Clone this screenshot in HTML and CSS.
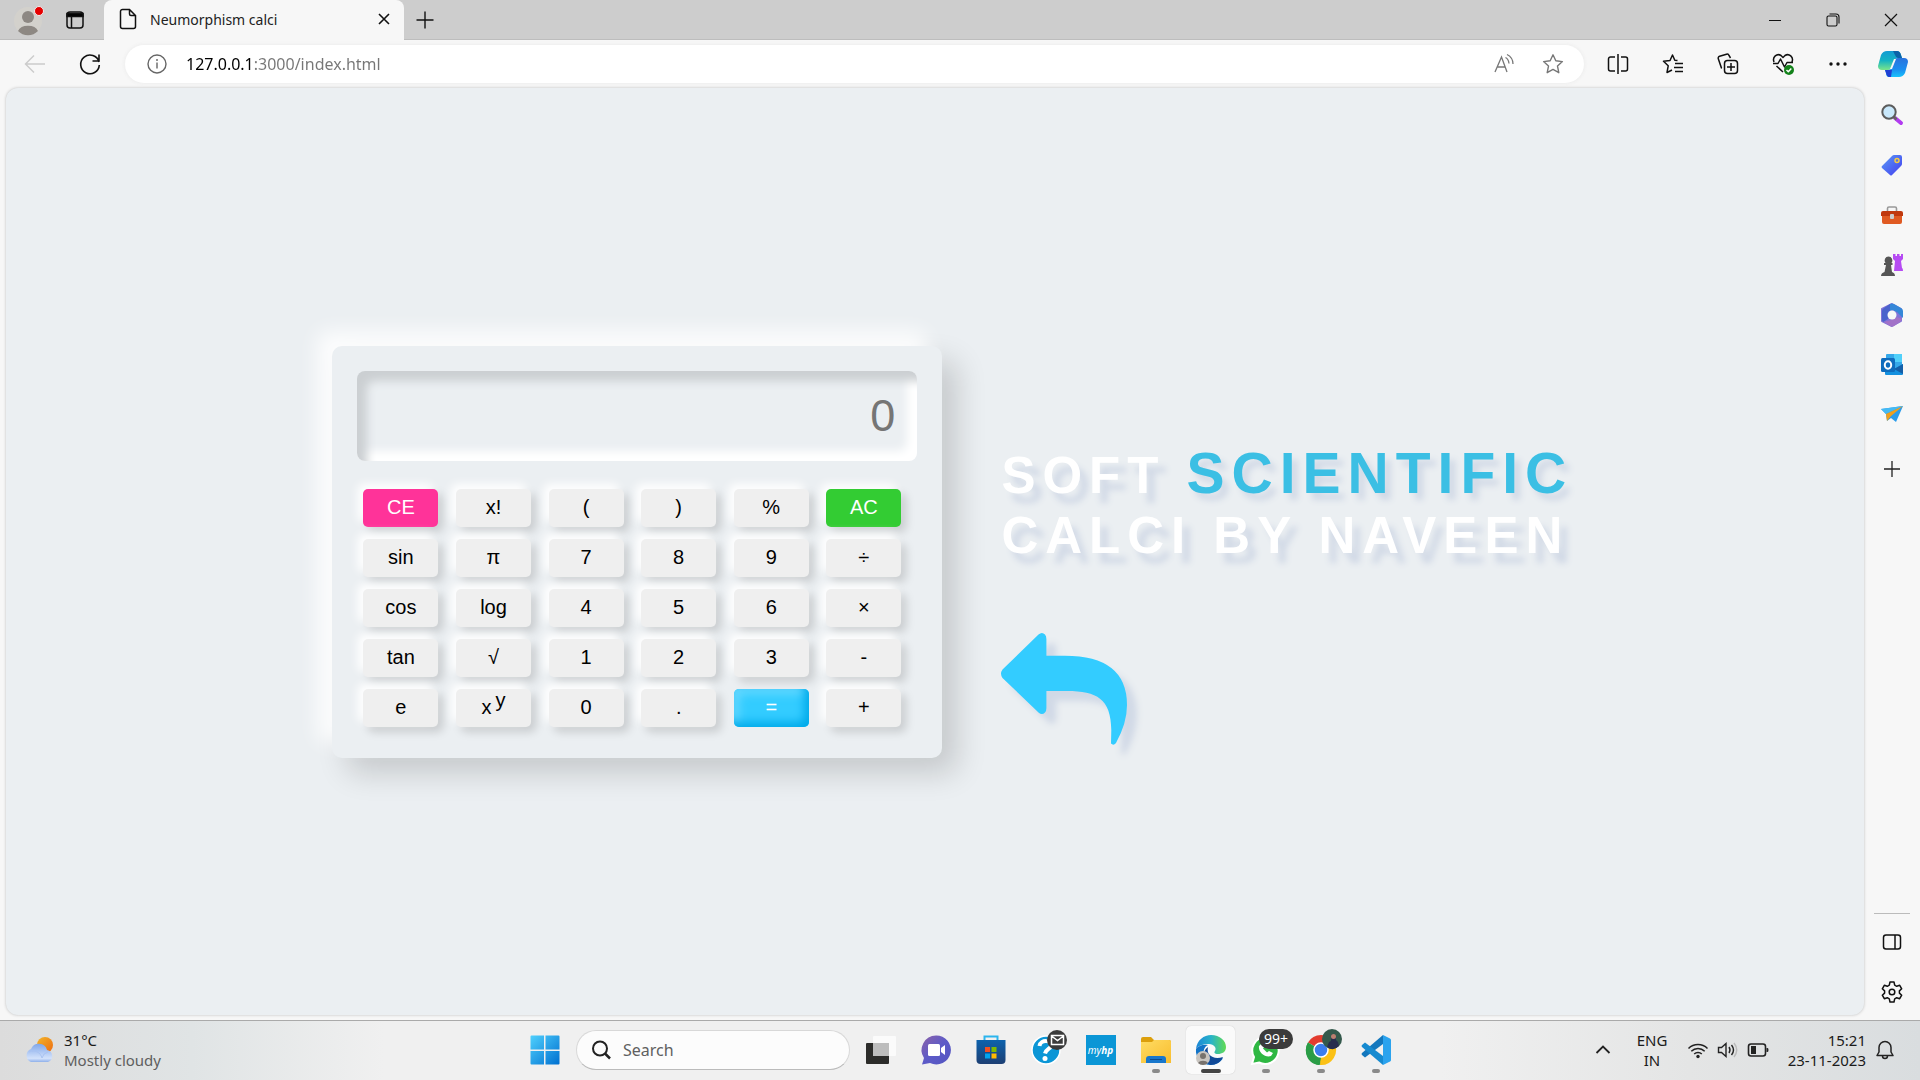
FILE: index.html
```html
<!DOCTYPE html>
<html lang="en">
<head>
<meta charset="utf-8">
<title>Neumorphism calci</title>
<link rel="stylesheet" href="styles.css">
</head>
<body>
<header class="titlebar">
  <button class="icon-btn avatar" aria-label="Profile">
    <svg width="32" height="32" viewBox="0 0 32 32"><circle cx="16" cy="17" r="14" fill="#d3d1cc"/><circle cx="16" cy="13" r="6" fill="#8d8883"/><path d="M6 27a10.500 7.500 0 0 1 20 0a14 14 0 0 1-20 0z" fill="#8d8883"/><circle cx="27" cy="7" r="4.500" fill="#e60000" stroke="#eee"/></svg>
  </button>
  <button class="icon-btn workspace" aria-label="Tab actions">
    <svg width="20" height="20" viewBox="0 0 20 20" fill="none" stroke="#111" stroke-width="1.500"><rect x="2" y="2" width="16" height="16" rx="3"/><path d="M2 3.500h16v3H2z" fill="#000"/><path d="M6.500 6v12"/></svg>
  </button>
  <div class="tab">
    <svg width="18" height="22" viewBox="0 0 18 22" fill="none" stroke="#111" stroke-width="1.500"><path d="M3.500 1.500h7l6 6v11a2 2 0 0 1-2 2h-11a2 2 0 0 1-2-2v-15a2 2 0 0 1 2-2zM10.500 1.500v4.500a1.500 1.500 0 0 0 1.500 1.500h4.500"/></svg>
    <span class="tab-title">Neumorphism calci</span>
    <button class="icon-btn tab-close" aria-label="Close tab"><svg width="12" height="12" viewBox="0 0 12 12" stroke="#111" stroke-width="1.600"><path d="M1 1l10 10M11 1L1 11"/></svg></button>
  </div>
  <button class="icon-btn new-tab" aria-label="New tab"><svg width="18" height="18" viewBox="0 0 18 18" stroke="#111" stroke-width="1.400"><path d="M9 .500v17M.500 9h17"/></svg></button>
  <div class="window-controls">
    <button class="icon-btn" aria-label="Minimize"><svg width="14" height="14" viewBox="0 0 14 14" stroke="#111"><path d="M1 7.500h12"/></svg></button>
    <button class="icon-btn" aria-label="Restore"><svg width="14" height="14" viewBox="0 0 14 14" stroke="#111" stroke-width="1.100" fill="none"><rect x="1" y="3" width="10" height="10" rx="1.500"/><path d="M3.500 1h6.500a3 3 0 0 1 3 3v6.500"/></svg></button>
    <button class="icon-btn" aria-label="Close"><svg width="14" height="14" viewBox="0 0 14 14" stroke="#111" stroke-width="1.200"><path d="M1 1l12 12M13 1L1 13"/></svg></button>
  </div>
</header>

<nav class="toolbar">
  <button class="icon-btn nav-btn" aria-label="Back"><svg width="22" height="20" viewBox="0 0 22 20" fill="none" stroke="#ccc" stroke-width="1.500"><path d="M21 10H2M10 1.500L1.500 10l8.500 8.500"/></svg></button>
  <button class="icon-btn nav-btn" aria-label="Refresh"><svg width="22" height="22" viewBox="0 0 22 22" fill="none" stroke="#111" stroke-width="1.600"><path d="M20 9a9.300 9.300 0 1 0 .3 3M20 1.500V8h-6.500"/></svg></button>
  <div class="address">
    <svg width="20" height="20" viewBox="0 0 20 20" fill="none" stroke="#666" stroke-width="1.400"><circle cx="10" cy="10" r="9"/><path d="M10 8.500v6M10 5v2"/></svg>
    <input class="url" type="text" aria-label="Address" value="127.0.0.1:3000/index.html">
    <button class="icon-btn addr-btn" aria-label="Read aloud"><svg width="22" height="22" viewBox="0 0 22 22" fill="none" stroke="#777" stroke-width="1.300"><path d="M2 19L8.500 4 14 19M4.500 14h8M12.500 4.500q3 1.500 3.500 6M14 1.500q6 3 6 9.500"/></svg></button>
    <button class="icon-btn addr-btn" aria-label="Favorite"><svg width="22" height="22" viewBox="0 0 22 22" fill="none" stroke="#777" stroke-width="1.400" stroke-linejoin="round"><path d="M11 1.800l2.800 6 6.600.8-4.900 4.500 1.300 6.600-5.800-3.300-5.800 3.300 1.300-6.600L1.600 8.600l6.600-.8z"/></svg></button>
  </div>
  <div class="tools">
    <button class="icon-btn" aria-label="Split screen"><svg width="22" height="22" viewBox="0 0 22 22" fill="none" stroke="#111" stroke-width="1.500"><path d="M8 4H3.500A2 2 0 0 0 1.500 6v10a2 2 0 0 0 2 2H8M14 4h4.500a2 2 0 0 1 2 2v10a2 2 0 0 1-2 2H14M11 1v20"/></svg></button>
    <button class="icon-btn" aria-label="Favorites"><svg width="22" height="22" viewBox="0 0 22 22" fill="none" stroke="#111" stroke-width="1.500" stroke-linejoin="round"><path d="M15.500 7.500l-2.700-.3L10.500 2 8 7.500l-6.500.8 4.700 4.500L5 19.500l5-2.500M13 10.500h8M12 14.500h9M13 18.500h8"/></svg></button>
    <button class="icon-btn" aria-label="Collections"><svg width="22" height="22" viewBox="0 0 22 22" fill="none" stroke="#111" stroke-width="1.500"><rect x="7.500" y="7.500" width="13" height="13" rx="3"/><path d="M14 10v8M10 14h8M5 15l-.6-.2L1.300 5.800a2 2 0 0 1 1.300-2.600L9.500 1.200A2 2 0 0 1 12 2.500L13.500 5"/></svg></button>
    <button class="icon-btn" aria-label="Browser essentials"><svg width="22" height="22" viewBox="0 0 22 22" fill="none" stroke="#111" stroke-width="1.500" stroke-linejoin="round"><path d="M2 9C0 4 5 0 9 2.500l2 2 2-2C17 0 22 4 20 9M1 10.500h5l2.500-4.500 4 8 2.500-4.500h6M4.500 13l6.500 6"/><circle cx="17" cy="17" r="5" fill="#13821a" stroke="none"/><path d="M14.500 17l1.800 1.700 3-3.200" stroke="#fff"/></svg></button>
    <button class="icon-btn" aria-label="Settings and more"><svg width="22" height="22" viewBox="0 0 22 22" fill="#111"><circle cx="4" cy="11" r="1.700"/><circle cx="11" cy="11" r="1.700"/><circle cx="18" cy="11" r="1.700"/></svg></button>
    <button class="icon-btn" aria-label="Copilot"><svg width="30" height="30" viewBox="0 0 30 30"><defs><linearGradient id="ca" x1="0" y1="0" x2="0" y2="1"><stop stop-color="#129bd3"/><stop offset=".5" stop-color="#14b3c3"/><stop offset="1" stop-color="#7be58a"/></linearGradient><linearGradient id="cb" x1="0" y1="0" x2="0" y2="1"><stop stop-color="#2a72dc"/><stop offset=".6" stop-color="#1b8df0"/><stop offset="1" stop-color="#19c2fb"/></linearGradient></defs><path d="M9 2h10q3 0 4 4l1 3h-3q-4 0-5 3l-2 6q-1 3-4 3H4q-4 0-4-4l3-11q2-4 6-4z" fill="url(#ca)"/><path d="M15 2h4q3 0 4 4l1 3h-4q-2 0-3-3z" fill="#0b63a8"/><path d="M21 28H11q-3 0-3-4l-1-3h3q3 0 4-3l2-6q1-3 4-3h6q4 0 4 4l-3 11q-2 4-6 4z" fill="url(#cb)"/><path d="M7 21h7l-1 7h-2q-2 0-3-4z" fill="#203fd3"/><path d="M16 10h2l-4 10h-2z" fill="#f7f7f7"/></svg></button>
  </div>
</nav>

<div class="workspace-area">
<main class="page">
  <section class="calculator" aria-label="Calculator">
    <input class="display" type="text" placeholder="0" aria-label="Result">
    <div class="keys">
      <button class="key key-ce">CE</button><button class="key">x!</button><button class="key">(</button><button class="key">)</button><button class="key">%</button><button class="key key-ac">AC</button>
      <button class="key">sin</button><button class="key">π</button><button class="key">7</button><button class="key">8</button><button class="key">9</button><button class="key">÷</button>
      <button class="key">cos</button><button class="key">log</button><button class="key">4</button><button class="key">5</button><button class="key">6</button><button class="key">×</button>
      <button class="key">tan</button><button class="key">√</button><button class="key">1</button><button class="key">2</button><button class="key">3</button><button class="key">-</button>
      <button class="key">e</button><button class="key">x<sup class="power">y</sup></button><button class="key">0</button><button class="key">.</button><button class="key key-eq">=</button><button class="key">+</button>
    </div>
  </section>
  <section class="hero">
    <h1 class="headline">SOFT <span class="accent">SCIENTIFIC</span><br>CALCI BY NAVEEN</h1>
    <svg class="arrow" width="126" height="112" viewBox="0 0 126 112"><path d="M37.500 1.500Q41 -1.500 44 1.500Q45.400 3 45.400 6V22.700H62Q126 22 126 72Q126 90 115 110Q112.500 113 110 110.500L110.300 97C110 66 96 58 66 58H45.400V75Q45.400 78 44 79.500Q41 82.500 37.500 79.500L1.500 45Q-1.500 40.700 1.500 36.500Z" fill="#3cf"/></svg>
  </section>
</main>
<aside class="sidebar">
  <div class="side-group">
    <button class="icon-btn side-btn" aria-label="Search"><svg width="24" height="24" viewBox="0 0 24 24"><path d="M15 15l6 5" stroke="#b23cf0" stroke-width="4" stroke-linecap="round"/><path d="M13.500 13.500l3 3" stroke="#666" stroke-width="2.500"/><circle cx="9" cy="9" r="6.700" fill="#c9e8fb" stroke="#5c5c5c" stroke-width="2"/></svg></button>
    <button class="icon-btn side-btn" aria-label="Shopping"><svg width="24" height="24" viewBox="0 0 24 24"><defs><linearGradient id="tg" x1="0" y1="0" x2="1" y2="1"><stop stop-color="#5a9cf5"/><stop offset="1" stop-color="#433cf0"/></linearGradient></defs><path d="M14 2h6q2 0 2 2v7q0 1-1 2l-9 9q-1 1-2 0l-8-7q-1-1 0-2L12 3q1-1 2-1z" fill="url(#tg)"/><circle cx="17" cy="7.500" r="2" fill="#5a76dd" stroke="#f5cb45" stroke-width="1.500"/></svg></button>
    <button class="icon-btn side-btn" aria-label="Tools"><svg width="24" height="24" viewBox="0 0 24 24"><path d="M7.500 8V5.500Q7.500 4 9 4h6q1.500 0 1.500 1.500V8" fill="none" stroke="#999" stroke-width="1.600"/><path d="M3 8h18q2 0 2 2v3H1v-3q0-2 2-2z" fill="#c0380e"/><path d="M2 13h20v6q0 2-2 2H4q-2 0-2-2z" fill="#e05a22"/><rect x="10" y="11" width="4" height="5" rx="1" fill="#ccc"/></svg></button>
    <button class="icon-btn side-btn" aria-label="Games"><svg width="24" height="24" viewBox="0 0 24 24"><path d="M13 1h2.500v2H17V1h2.500v2H21V1h2v5l-2 2 1 7q1 0 1 3H14l1-10-2-2z" fill="#b64bf3"/><path d="M8.500 3.500a4 4 0 0 1 3 6.500h1v2h-1.500l1 7q3 1 3 4H1q0-3 3.500-4l1.500-7H4v-2h1.500a4 4 0 0 1 3-6.500z" fill="#555"/></svg></button>
    <button class="icon-btn side-btn" aria-label="Microsoft 365"><svg width="24" height="24" viewBox="0 0 24 24"><path d="M12 1l9 5v12l-9 5-10-5V6z" fill="#8173d8" stroke="#8173d8" stroke-width="2" stroke-linejoin="round"/><path d="M10 1q2-1 4 0l7 4q2 1 2 3v7l-6-6-5-2-4 3V4z" fill="#3587d8"/><path d="M2 8q0-2 2-3l6-4v9l-2 6-5 3q-1-1-1-3z" fill="#4a62cc"/><path d="M4 19l7-2 6-3 5 2q-1 2-2 3l-6 4q-2 1-4 0z" fill="#a272c8"/><circle cx="12" cy="12" r="4.500" fill="#f7f7f7"/></svg></button>
    <button class="icon-btn side-btn" aria-label="Outlook"><svg width="24" height="24" viewBox="0 0 24 24"><rect x="6" y="1" width="16" height="16" rx="1" fill="#35a8ea"/><path d="M14 1h8v8h-8z" fill="#50d0fa"/><path d="M5 11l9 5 9-5v10q0 1-1 1H6q-1 0-1-1z" fill="#1490df"/><path d="M14 16l9-5v10z" fill="#145fa8"/><rect x="1" y="5" width="14" height="14" rx="1.500" fill="#0f6cbd"/><ellipse cx="8" cy="12" rx="3.200" ry="3.700" fill="none" stroke="#fff" stroke-width="2"/></svg></button>
    <button class="icon-btn side-btn" aria-label="Drop"><svg width="24" height="24" viewBox="0 0 24 24"><path d="M1 6l22-3-7 16-5-4-4 3-1-7z" fill="#2a9ceb"/><path d="M23 3L6 11 1 6z" fill="#45baf4"/><path d="M23 3L6 11l1 7 4-5z" fill="#f0a01c"/></svg></button>
  </div>
  <button class="icon-btn side-btn side-add" aria-label="Add"><svg width="16" height="16" viewBox="0 0 16 16" stroke="#222" stroke-width="1.300"><path d="M8 0v16M0 8h16"/></svg></button>
  <div class="side-group side-foot">
    <button class="icon-btn side-btn" aria-label="Hide sidebar"><svg width="20" height="20" viewBox="0 0 20 20" fill="none" stroke="#111" stroke-width="1.500"><rect x="1.500" y="3" width="17" height="14" rx="2.500"/><path d="M13 3v14"/></svg></button>
    <button class="icon-btn side-btn" aria-label="Settings"><svg width="22" height="22" viewBox="0 0 22 22" fill="none" stroke="#111" stroke-width="1.500" stroke-linejoin="round"><path d="M9 1h4l.7 3.200 2 1.100 3-1 2 3.500-2.300 2.100v2.200l2.300 2.100-2 3.500-3-1-2 1.100L13 21H9l-.7-3.200-2-1.100-3 1-2-3.500 2.300-2.100V9.900L1.300 7.800l2-3.500 3 1 2-1.100z"/><circle cx="11" cy="11" r="2.800"/></svg></button>
  </div>
</aside>
</div>

<footer class="taskbar">
  <button class="weather">
    <svg width="32" height="30" viewBox="0 0 32 30"><defs><linearGradient id="cl" x1="0" y1="0" x2="0" y2="1"><stop stop-color="#80a7ea"/><stop offset=".8" stop-color="#d3e2fb"/><stop offset="1" stop-color="#8fb0ea"/></linearGradient><linearGradient id="sn" x1="0" y1="0" x2="1" y2="1"><stop stop-color="#f2b62a"/><stop offset="1" stop-color="#ee6a10"/></linearGradient></defs><circle cx="22" cy="10" r="8" fill="url(#sn)"/><path d="M8 27a7 7 0 0 1 0-13 8.500 8.500 0 0 1 16 1 6.200 6.200 0 0 1 1 12z" fill="url(#cl)"/><path d="M6 17a9 9 0 0 1 13 6 8 8 0 0 1 6-6" fill="none" stroke="#a9c3f2"/></svg>
    <span class="weather-text"><span>31°C</span><span class="muted">Mostly cloudy</span></span>
  </button>
  <div class="dock">
    <button class="app" aria-label="Start"><svg width="30" height="30" viewBox="0 0 30 30"><defs><linearGradient id="wn" x1="0" y1="0" x2="1" y2="1"><stop stop-color="#4fd0fd"/><stop offset="1" stop-color="#0070d0"/></linearGradient></defs><path d="M.5 1.500q0-1 1-1H14v14H.5zM15.500.500H28.500q1 0 1 1v13h-14zM.5 16H14v13.500H1.500q-1 0-1-1zM15.500 16h14v12.500q0 1-1 1h-13z" fill="url(#wn)"/></svg></button>
    <label class="search">
      <svg width="20" height="20" viewBox="0 0 20 20" fill="none" stroke="#222" stroke-width="2"><circle cx="9" cy="8.500" r="7"/><path d="M14 13.500l5 5" stroke-width="2.500"/></svg>
      <input class="search-input" type="text" placeholder="Search" aria-label="Search">
    </label>
    <button class="app" aria-label="Task view"><svg width="30" height="30" viewBox="0 0 30 30"><rect x="0" y="8" width="23" height="21" rx="1" fill="#2c2c2a"/><rect x="7" y="1" width="23" height="20" rx="1" fill="#fbfbfb"/><rect x="7" y="8" width="16" height="13" fill="#bdbdbd"/></svg></button>
    <button class="app" aria-label="Chat"><svg width="30" height="30" viewBox="0 0 30 30"><defs><linearGradient id="ct" x1="0" y1="0" x2="1" y2="1"><stop stop-color="#8d62a8"/><stop offset=".5" stop-color="#5d5bc8"/><stop offset="1" stop-color="#5355c0"/></linearGradient></defs><path d="M15 .500a14.500 14.500 0 1 1-6 27.500L1 29.500 3 23A14.500 14.500 0 0 1 15 .500z" fill="url(#ct)"/><rect x="7" y="9" width="12" height="12" rx="1.500" fill="#fff"/><path d="M20 13l4-3v10l-4-3z" fill="#fff"/></svg></button>
    <button class="app" aria-label="Store"><svg width="30" height="30" viewBox="0 0 30 30"><defs><linearGradient id="st" x1="0" y1="0" x2="0" y2="1"><stop stop-color="#0d62ad"/><stop offset="1" stop-color="#1d3f73"/></linearGradient></defs><path d="M8.500 6V1.500h13V6" fill="none" stroke="#2cb5ee" stroke-width="2"/><path d="M.5 5h29v20q0 4-4 4h-21q-4 0-4-4z" fill="url(#st)"/><path d="M9 12h5v5H9z" fill="#f25022"/><path d="M15.500 12h5v5h-5z" fill="#7fba00"/><path d="M9 18.500h5v5H9z" fill="#00a4ef"/><path d="M15.500 18.500h5v5h-5z" fill="#ffb900"/></svg></button>
    <button class="app" aria-label="Help"><svg width="36" height="36" viewBox="-3 1 36 36"><circle cx="15" cy="19" r="14" fill="#0b96d6" stroke="#fff" stroke-width="1.500"/><path d="M8.500 15c1-7 13-6 11.500 0-.800 3-5 3-6 7.500" fill="none" stroke="#fff" stroke-width="4"/><circle cx="14" cy="27.500" r="2.500" fill="#fff"/><circle cx="26" cy="9" r="10" fill="#3b3b3b"/><path d="M20.500 4.500h12v9h-12zM20.500 5l6 4.500 6-4.500" fill="none" stroke="#fff" stroke-width="1.500"/></svg></button>
    <button class="app" aria-label="myHP"><span class="myhp">my<b>hp</b></span></button>
    <button class="app running" aria-label="File Explorer"><svg width="30" height="30" viewBox="0 0 30 30"><defs><linearGradient id="fd" x1="0" y1="0" x2="1" y2="1"><stop stop-color="#ffdc63"/><stop offset="1" stop-color="#f8bd2e"/></linearGradient></defs><path d="M0 4q0-2 2-2h8l3 3h15q2 0 2 2v3H0z" fill="#dc9f0c"/><path d="M0 7h11l2-2h15q2 0 2 2v21H0z" fill="url(#fd)"/><path d="M5 28v-4q0-3 3-3h14q3 0 3 3v4z" fill="#1877cc"/><path d="M9 24.500h12" stroke="#0c4c90"/></svg></button>
    <button class="app running active" aria-label="Edge"><svg width="30" height="30" viewBox="0 0 30 30"><defs><linearGradient id="ea" x1="0" y1="0" x2="1" y2="0"><stop stop-color="#1c86d8"/><stop offset=".5" stop-color="#28b3c9"/><stop offset="1" stop-color="#62db52"/></linearGradient></defs><path d="M0 14C1 5 8 0 15 0c9 0 15 6 15 12 0 5-4 7-8 7-4 0-4-2-3-3 2-3-1-7-6-7C7 9 2 11 0 14z" fill="url(#ea)"/><path d="M0 14c2-3 7-5 12-4-4 2-5 6-4 10 2 6 10 9 19 3-2 4-7 7-12 7C6 30-1 23 0 14z" fill="#1374c7"/><path d="M12 12c-2 8 5 13 15 10-2 5-7 8-13 8-7-4-9-13-2-18z" fill="#114a98"/><circle cx="7" cy="23" r="7" fill="#c9c5c0"/><circle cx="7" cy="21" r="3" fill="#77726d"/><path d="M2 28a5.500 4 0 0 1 10 0a7 7 0 0 1-10 0z" fill="#77726d"/></svg></button>
    <button class="app running" aria-label="WhatsApp"><svg width="30" height="30" viewBox="0 0 30 30"><path d="M14 2a13.500 13.500 0 1 1-6 25.500L1 29l2-7A13.500 13.500 0 0 1 14 2z" fill="#2fb843" stroke="#fff" stroke-width="2"/><path d="M8 11c-1 6 6 12 12 10l2-3-4-2-2 1.500-4-4 1.500-2L11 8z" fill="#fff"/></svg><span class="badge">99+</span></button>
    <button class="app running" aria-label="Chrome"><svg width="36" height="36" viewBox="0 3 36 36"><path d="M18 21L5 13.500A15 15 0 0 1 31 13.500z" fill="#e33b2e"/><path d="M18 21L5 13.500A15 15 0 0 0 18 36z" fill="#2a9c46"/><path d="M18 21L31 13.500A15 15 0 0 1 17 36z" fill="#fbc116"/><path d="M5 13.500l7 12 6 3-2 7.500C4 35 0 22 5 13.500z" fill="#2a9c46"/><circle cx="18" cy="21" r="7" fill="#3b7ded" stroke="#fff" stroke-width="1.500"/><circle cx="29" cy="10" r="10" fill="#34594c"/><path d="M24 18l2-5 2-1V7q2-4 5 0v4l2 2 1 4q-6 6-12 1z" fill="#272d4d"/><circle cx="30.500" cy="7.500" r="2.500" fill="#bb8070"/></svg></button>
    <button class="app running" aria-label="Visual Studio Code"><svg width="30" height="30" viewBox="0 0 30 30"><path d="M22 0v9L4 22.500l-3-2.500q-1-1 0-2z" fill="#1377bd"/><path d="M22 30v-9L4 7.500 1 10q-1 1 0 2z" fill="#168ad0"/><path d="M22 0l7 3.500q1 .5 1 1.500v20q0 1-1 1.500L22 30z" fill="#2ba3ee"/></svg></button>
  </div>
  <div class="tray">
    <button class="icon-btn" aria-label="Hidden icons"><svg width="16" height="16" viewBox="0 0 16 16" fill="none" stroke="#222" stroke-width="1.800"><path d="M1.500 11L8 4.500l6.500 6.500"/></svg></button>
    <button class="lang"><span>ENG</span><span>IN</span></button>
    <button class="status" aria-label="Network, sound and battery">
      <svg width="22" height="18" viewBox="0 0 22 18" fill="none" stroke="#222" stroke-width="1.500"><path d="M1.500 7.500a13.500 13.500 0 0 1 19 0M4.300 10.300a9.500 9.500 0 0 1 13.400 0M7.200 13a5.500 5.500 0 0 1 7.600 0"/><circle cx="11" cy="15.500" r="1.700" fill="#222" stroke="none"/></svg>
      <svg width="22" height="18" viewBox="0 0 22 18" fill="none" stroke="#222" stroke-width="1.400"><path d="M1.500 6.500h3L9 2.500v13l-4.500-4h-3zM12 6q2 3 0 6M14.500 4q4 5 0 10"/><path d="M17 2q5.500 7 0 14" stroke="#bbb"/></svg>
      <svg width="22" height="18" viewBox="0 0 22 18"><rect x="1.500" y="3" width="17" height="12" rx="2.500" fill="none" stroke="#222" stroke-width="1.600"/><rect x="4" y="5" width="5" height="8" fill="#222"/><path d="M19.500 7h1q1 0 1 2t-1 2h-1z" fill="#222"/></svg>
    </button>
    <button class="clock"><span>15:21</span><span>23-11-2023</span></button>
    <button class="icon-btn" aria-label="Notifications"><svg width="18" height="20" viewBox="0 0 18 20" fill="none" stroke="#222" stroke-width="1.500" stroke-linejoin="round"><path d="M9 1.500a6 6 0 0 1 6 6V12l2 3.500H1L3 12V7.500a6 6 0 0 1 6-6zM6.500 16a2.500 2.500 0 0 0 5 0"/></svg></button>
  </div>
</footer>
</body>
</html>
```
FILE: styles.css
```css
* { box-sizing: border-box; }
body {
  margin: 0;
  min-height: 100vh;
  display: flex;
  flex-direction: column;
  background: #f7f7f7;
  color: #1b1b1b;
  font-family: "Noto Sans", "Open Sans", sans-serif;
  font-size: 14px;
}
button, input { font: inherit; color: inherit; border: 0; padding: 0; background: none; }
svg { display: block; flex: none; overflow: visible; }
.icon-btn { display: flex; align-items: center; justify-content: center; flex: none; }

/* Title bar */
.titlebar { display: flex; align-items: center; height: 40px; background: #cdcdcd; box-shadow: inset 0 -1px #bdbdbd; }
.avatar { margin: 0 21px 0 12px; }
.workspace { margin-right: 19px; width: 20px; }
.tab {
  align-self: stretch;
  display: flex;
  align-items: center;
  gap: 12px;
  width: 300px;
  padding: 0 14px 2px 15px;
  background: #f7f7f7;
  border-radius: 8px 8px 0 0;
}
.tab-title { flex: 1; color: #222; padding-left: 1px; white-space: nowrap; }
.new-tab { margin-left: 12px; }
.window-controls { margin-left: auto; display: flex; align-self: stretch; }
.window-controls .icon-btn { width: 58px; }

/* Toolbar */
.toolbar { display: flex; align-items: center; height: 48px; padding: 0 0 1px 7px; }
.nav-btn { width: 55px; }
.address {
  flex: 1;
  display: flex;
  align-items: center;
  height: 38px;
  margin-left: 8px;
  padding: 0 7px 0 22px;
  border-radius: 19px;
  background: #fff;
  box-shadow: 0 0 4px #e9e9e9;
}
.url {
  flex: 1;
  margin-left: 19px;
  font-size: 16px;
  color: #767676;
  -webkit-text-fill-color: transparent;
  background: linear-gradient(90deg, #000 68px, #767676 68px);
  -webkit-background-clip: text;
  background-clip: text;
}
.addr-btn { width: 49px; }
.tools { display: flex; padding-left: 6px; }
.tools .icon-btn { width: 55px; }

/* Web page */
.workspace-area { flex: 1; display: flex; }
.page {
  flex: 1;
  display: flex;
  align-items: center;
  gap: 59px;
  margin: 0 0 5px 6px;
  padding-left: 17vw;
  border-radius: 12px;
  background: #ebeff2;
  box-shadow: 0 0 3px #bbb;
  font-family: "Liberation Sans", Arial, sans-serif;
}
.calculator {
  flex: none;
  width: 610px;
  padding: 25px 25px 31px;
  border-radius: 10px;
  background: #ebeff2;
  box-shadow: -15px -15px 20px rgba(255, 255, 255, .85), 15px 15px 30px rgba(0, 0, 0, .16);
}
.display {
  display: block;
  width: 100%;
  height: 90px;
  padding: 0 22px;
  border-radius: 8px;
  font-size: 45px;
  text-align: right;
  box-shadow: inset 10px 10px 10px #cbcfd2, inset -10px -10px 10px #fff;
}
.display::placeholder { color: #757575; opacity: 1; }
.keys {
  display: grid;
  grid-template-columns: repeat(6, 75px);
  justify-content: space-between;
  row-gap: 12px;
  padding: 28px 16px 0 6px;
}
.key {
  height: 38px;
  border-radius: 5px;
  background: #efefef;
  color: #000;
  font-size: 20px;
  box-shadow: -5px -5px 10px #fff, 5px 5px 10px rgba(0, 0, 0, .15);
}
.power { margin-left: 4px; font-size: 20px; line-height: 0; vertical-align: 7px; }
.key-ce { background: #ff3399; color: #fff; }
.key-ac { background: #33cc33; color: #fff; }
.key-eq { background: #33ccff; color: #fff; box-shadow: inset -5px -5px 10px #00aaea, inset 5px 5px 10px #66d9ff; }

.hero { padding-top: 84px; }
.headline {
  margin: 0 0 67px;
  color: #fff;
  font-size: 51px;
  line-height: 60px;
  letter-spacing: 7px;
  white-space: nowrap;
  text-shadow: 8px 10px 6px #d1d9e6;
}
.accent { color: #3bbfe4; font-size: 57px; text-shadow: 6px 7px 6px #d1d9e6; }
.arrow { filter: drop-shadow(10px 10px 3px #d1d9e6); }

/* Sidebar */
.sidebar { flex: none; width: 56px; display: flex; flex-direction: column; align-items: center; padding: 2px 0 3px; }
.side-group { display: flex; flex-direction: column; }
.side-btn { width: 36px; height: 50px; }
.side-add { margin: 4px 0 auto; }
.side-foot { border-top: 1px solid #bbb; padding-top: 3px; }

/* Taskbar */
.taskbar {
  display: grid;
  grid-template-columns: 1fr auto 1fr;
  height: 60px;
  padding-bottom: 1px;
  border-top: 1px solid #aaa;
  background: linear-gradient(90deg, #dcdcdc, #e0e4e5 10%, #f0f0f0 20%, #f0f0f0 75%, #e4e5e5 88%, #d9dddf);
  font-size: 15px;
}
.weather { display: flex; align-items: center; gap: 9px; padding-left: 23px; text-align: left; }
.weather-text, .lang, .clock { display: flex; flex-direction: column; line-height: 20px; }
.muted { color: #5e5e5e; }
.dock { display: flex; align-items: center; }
.app { position: relative; display: flex; align-items: center; justify-content: center; width: 55px; height: 48px; }
.app svg { margin: auto; }
.search {
  display: flex;
  align-items: center;
  gap: 12px;
  width: 274px;
  height: 40px;
  margin: 0 3px 0 4px;
  padding: 0 14px;
  border: 1px solid #d8d8d8;
  border-bottom-color: #bbb;
  border-radius: 20px;
  background: #fcfcfc;
}
.search-input { width: 100%; font-size: 16px; }
.search-input::placeholder { color: #606060; opacity: 1; }
.myhp { width: 30px; height: 30px; background: #0b96d6; color: #fff; font-size: 10px; line-height: 30px; font-style: italic; text-align: center; }
.running::after {
  content: "";
  position: absolute;
  bottom: 1px;
  left: 24px;
  width: 8px;
  height: 4px;
  border-radius: 2px;
  background: #8a8a8a;
}
.active { background: #fafafa; border-radius: 5px; width: 49px; margin: 0 3px; box-shadow: 0 0 1px #bbb; }
.active::after { left: 15px; width: 20px; background: #444; }
.badge {
  position: absolute;
  top: 3px;
  left: 21px;
  width: 34px;
  border-radius: 10px;
  background: #3b3b3b;
  color: #fff;
  font-size: 14px;
  line-height: 20px;
}
.tray { display: flex; align-items: center; justify-content: flex-end; padding-right: 26px; }
.lang { width: 52px; margin: 0 9px 0 15px; align-items: center; }
.status { display: flex; gap: 8px; margin: 0 15px 0 0; }
.clock { align-items: flex-end; margin-right: 10px; width: 82px; white-space: nowrap; }
```
